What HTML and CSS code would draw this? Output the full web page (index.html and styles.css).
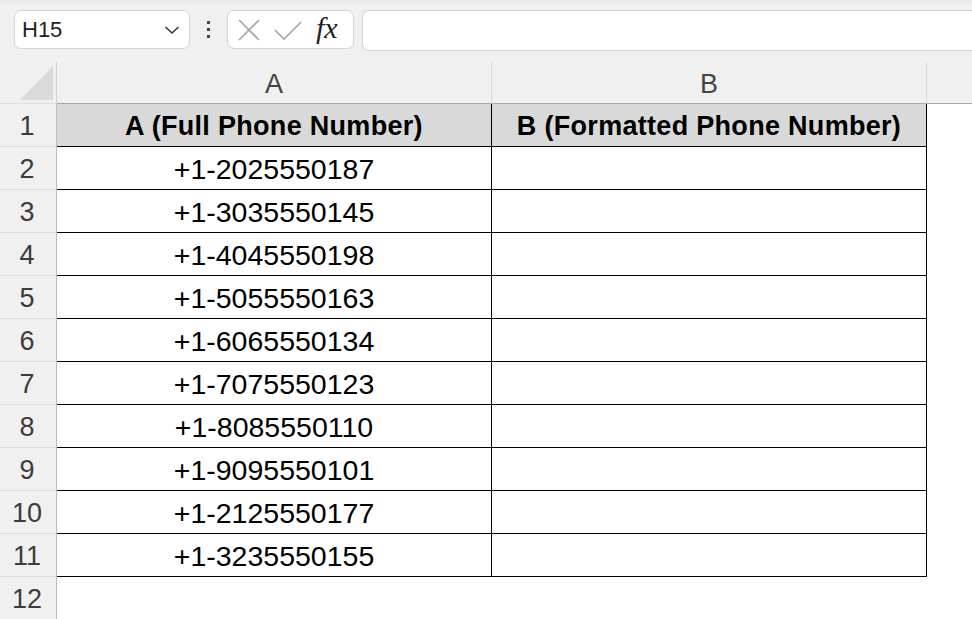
FILE: index.html
```html
<!DOCTYPE html>
<html>
    <head>
        <title>Phone numbers</title>
        <link rel="stylesheet" href="styles.css">
    </head>
    <body>
        <div class="toolbar">
            <div class="nameBox">
                <span>H15</span>
                <svg class="chevron" width="16" height="10" viewBox="0 0 16 10"><path d="M1.5 2 L8 8 L14.5 2" fill="none" stroke="#333" stroke-width="1.5"/></svg>
            </div>
            <div class="dots"><i></i><i></i><i></i></div>
            <div class="fxBox">
                <svg width="24" height="24" viewBox="0 0 24 24"><path d="M2 2 L22 22 M22 2 L2 22" stroke="#a6a6a6" stroke-width="1.6" fill="none"/></svg>
                <svg width="30" height="24" viewBox="0 0 30 24"><path d="M2 12 L11 21 L28 4" stroke="#a6a6a6" stroke-width="1.6" fill="none"/></svg>
                <span class="fx">fx</span>
            </div>
            <div class="formulaBar"></div>
        </div>

        <div class="sheet">
            <div class="corner"><div class="triangle"></div></div>
            <div class="colHead">A</div>
            <div class="colHead">B</div>
            <div class="colHead rest"></div>

            <div class="num">1</div>
            <div class="cell head">A (Full Phone Number)</div>
            <div class="cell head">B (Formatted Phone Number)</div>
            <div class="blank"></div>

            <div class="num">2</div>
            <div class="cell">+1-2025550187</div>
            <div class="cell"></div>
            <div class="blank"></div>

            <div class="num">3</div>
            <div class="cell">+1-3035550145</div>
            <div class="cell"></div>
            <div class="blank"></div>

            <div class="num">4</div>
            <div class="cell">+1-4045550198</div>
            <div class="cell"></div>
            <div class="blank"></div>

            <div class="num">5</div>
            <div class="cell">+1-5055550163</div>
            <div class="cell"></div>
            <div class="blank"></div>

            <div class="num">6</div>
            <div class="cell">+1-6065550134</div>
            <div class="cell"></div>
            <div class="blank"></div>

            <div class="num">7</div>
            <div class="cell">+1-7075550123</div>
            <div class="cell"></div>
            <div class="blank"></div>

            <div class="num">8</div>
            <div class="cell">+1-8085550110</div>
            <div class="cell"></div>
            <div class="blank"></div>

            <div class="num">9</div>
            <div class="cell">+1-9095550101</div>
            <div class="cell"></div>
            <div class="blank"></div>

            <div class="num">10</div>
            <div class="cell">+1-2125550177</div>
            <div class="cell"></div>
            <div class="blank"></div>

            <div class="num">11</div>
            <div class="cell">+1-3235550155</div>
            <div class="cell"></div>
            <div class="blank"></div>

            <div class="num">12</div>
            <div class="blank"></div>
            <div class="blank"></div>
            <div class="blank"></div>
        </div>
    </body>
</html>
```

FILE: styles.css
```css
body{
    margin:0;
    background:#f0f0f0;
    font-family:"Liberation Sans", Arial, sans-serif;
    overflow:hidden;
    height:619px;
}

/* top bar with name box and formula bar */
.toolbar{
    height:62px;
    box-sizing:border-box;
    padding:10px 0 0 14px;
    display:flex;
    align-items:flex-start;
    background:linear-gradient(#e9e9e9, #f0f0f0 6px);
}
.nameBox{
    width:176px;
    height:39px;
    box-sizing:border-box;
    background:white;
    border:1px solid #d4d4d4;
    border-radius:7px;
    display:flex;
    align-items:center;
    justify-content:space-between;
    padding:0 9px 0 7px;
    font-size:22px;
    color:#222;
}
.dots{
    width:37px;
    height:39px;
    display:flex;
    flex-direction:column;
    align-items:center;
    justify-content:center;
    gap:4px;
}
.dots i{
    width:3px;
    height:3px;
    background:#444;
    display:block;
}
.fxBox{
    width:127px;
    height:39px;
    box-sizing:border-box;
    background:white;
    border:1px solid #d4d4d4;
    border-radius:7px;
    display:flex;
    align-items:center;
    gap:12px;
    padding-left:9px;
}
.fx{
    font-family:"Liberation Serif", serif;
    font-style:italic;
    font-size:30px;
    color:#222;
    margin-left:1px;
    margin-top:-3px;
}
.formulaBar{
    flex:1;
    height:39px;
    margin-left:8px;
    background:white;
    border:1px solid #d4d4d4;
    border-right:none;
    border-radius:7px 0 0 7px;
}

/* the grid */
.sheet{
    display:grid;
    grid-template-columns:57px 435px 435px 1fr;
    grid-template-rows:42px;
    grid-auto-rows:43px;
}
.corner{
    border-right:1px solid #cfcfcf;
    border-bottom:1px solid #dcdcdc;
    display:flex;
    align-items:flex-end;
    justify-content:flex-end;
    padding:0 3px 3px 0;
}
.triangle{
    width:33px;
    height:34px;
    background:#dadada;
    clip-path:polygon(100% 0, 100% 100%, 0 100%);
}
.colHead{
    border-right:1px solid #d8d8d8;
    border-bottom:1px solid #a9a9a9;
    display:flex;
    align-items:center;
    justify-content:center;
    font-size:27px;
    color:#444;
    padding-top:3px;
}
.colHead.rest{
    border-right:none;
}
.num{
    background:#f0f0f0;
    border-right:1px solid #bdbdbd;
    border-bottom:1px solid #dcdcdc;
    display:flex;
    align-items:center;
    justify-content:center;
    font-size:27px;
    color:#3c3c3c;
    padding-right:2px;
    padding-top:3px;
}
.cell{
    background:white;
    border-right:1px solid #000;
    border-bottom:1px solid #000;
    display:flex;
    align-items:center;
    justify-content:center;
    font-size:28.5px;
    color:#000;
    padding-top:3px;
}
.cell.head{
    background:#d9d9d9;
    font-weight:bold;
    font-size:27px;
    letter-spacing:0.3px;
    padding-top:2px;
}
.blank{
    background:white;
}
```
